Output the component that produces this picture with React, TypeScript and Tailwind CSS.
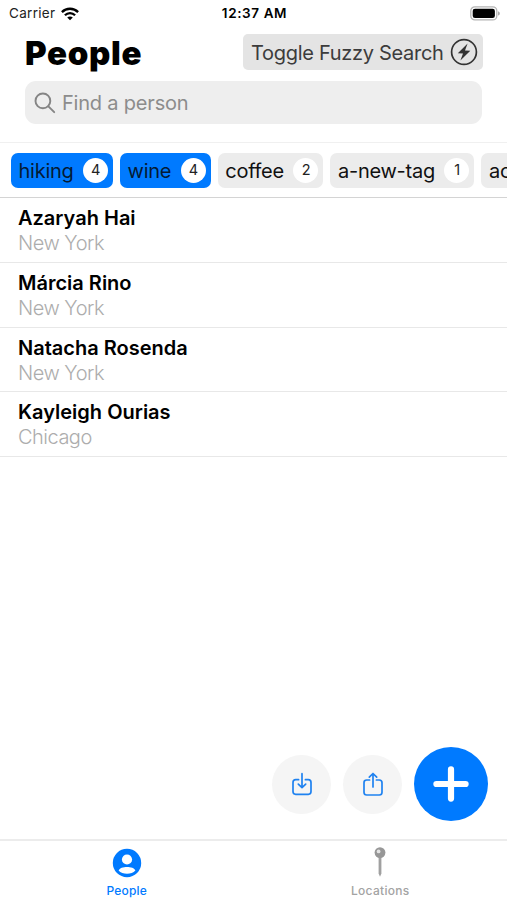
import React, { useState } from "react";

interface Tag {
  name: string;
  count: number;
}

interface Person {
  name: string;
  location: string;
}

const tags: Tag[] = [
  { name: "hiking", count: 4 },
  { name: "wine", count: 4 },
  { name: "coffee", count: 2 },
  { name: "a-new-tag", count: 1 },
  { name: "acting", count: 1 },
];

const people: Person[] = [
  { name: "Azaryah Hai", location: "New York" },
  { name: "Márcia Rino", location: "New York" },
  { name: "Natacha Rosenda", location: "New York" },
  { name: "Kayleigh Ourias", location: "Chicago" },
];

const StatusBar = () => (
  <div className="grid grid-cols-3 items-center h-[27px] pl-[9px] pr-[7px] text-[13.5px] leading-none">
    <div className="flex items-center gap-[6px]">
      <span className="text-[#222] tracking-[0.3px]">Carrier</span>
      <svg width="18" height="14" viewBox="0 0 18 14" fill="none" stroke="#000" strokeWidth="2.3">
        <path d="M0.9 5.1C5.4 0.6 12.6 0.6 17.1 5.1" />
        <path d="M3.9 8.2C6.8 5.3 11.2 5.3 14.1 8.2" />
        <path d="M9 13.3L6.2 10.5C7.8 9 10.2 9 11.8 10.5Z" fill="#000" stroke="none" />
      </svg>
    </div>
    <span className="pt-px text-center font-semibold whitespace-nowrap tracking-[0.6px]">12:37 AM</span>
    <svg className="justify-self-end" width="30" height="15" viewBox="0 0 30 15">
      <rect x="0.8" y="0.9" width="26" height="13" rx="4" fill="#fff" stroke="#b4b4b4" strokeWidth="1.3" />
      <rect x="2.7" y="2.7" width="22.2" height="9.4" rx="2.3" fill="#000" />
      <path d="M28.2 5.2C30.2 6.2 30.2 8.6 28.2 9.6Z" fill="#999" />
    </svg>
  </div>
);

const TagButton = ({ tag, active, onClick }: { tag: Tag; active: boolean; onClick: () => void }) => (
  <button
    onClick={onClick}
    className={`flex shrink-0 items-center justify-between h-[35px] pl-[7.5px] pr-[5px] rounded-[7px] text-[20px] tracking-[-0.25px] ${
      active ? "bg-[#007aff] text-[#041a35]" : "bg-[#ececec] text-[#111]"
    }`}
  >
    <span className="pt-px">{tag.name}</span>
    <span className="flex items-center justify-center ml-[9.5px] size-[25px] rounded-full bg-white text-[14.5px] text-[#222]">
      {tag.count}
    </span>
  </button>
);

const App = () => {
  const [search, setSearch] = useState("");
  const [activeTags, setActiveTags] = useState<string[]>(["hiking", "wine"]);

  const toggleTag = (name: string): void => {
    setActiveTags(
      activeTags.includes(name)
        ? activeTags.filter((t) => t !== name)
        : [...activeTags, name]
    );
  };

  return (
    <div className="relative flex flex-col w-full max-w-[507px] h-screen overflow-hidden bg-white text-black font-['Inter','Liberation_Sans',sans-serif]">
      <StatusBar />

      {/* Header */}
      <div className="flex items-center justify-between mt-[7px] h-9 pl-[25px] pr-6">
        <h1 className="pt-[2px] text-[33px] leading-9 font-black tracking-[0.7px]">People</h1>
        <button className="flex items-center justify-between w-[240px] h-9 pl-2 pr-[5px] rounded-[5px] bg-[#e4e4e4] text-[#3c3c3c] text-[20px] whitespace-nowrap">
          <span className="pt-[2px] tracking-[-0.3px]">Toggle Fuzzy Search</span>
          <svg width="28" height="28" viewBox="0 0 28 28" fill="none">
            <circle cx="14" cy="14" r="12.4" stroke="#333" strokeWidth="1.7" />
            <path d="M17.6 5.6L7.8 15.2L13 15.6L10.4 22.6L20.3 12.7L15 12.4Z" fill="#333" />
          </svg>
        </button>
      </div>

      {/* Search */}
      <div className="flex items-center mt-[11px] ml-[25px] mr-[25px] h-[43px] pl-[9px] gap-[6px] rounded-[11px] bg-[#eeeeee]">
        <svg className="shrink-0" width="22" height="22" viewBox="0 0 22 22" fill="none" stroke="#858585" strokeWidth="1.9" strokeLinecap="round">
          <circle cx="8.9" cy="8.9" r="7.4" />
          <path d="M14.4 14.4L20.2 20.2" />
        </svg>
        <input
          type="text"
          value={search}
          onChange={(e) => setSearch(e.target.value)}
          placeholder="Find a person"
          className="w-full bg-transparent outline-none text-[20px] tracking-[-0.2px] placeholder:text-[#8c8c8c]"
        />
      </div>

      {/* Tags */}
      <div className="flex items-center mt-[18px] h-14 shrink-0 gap-[7px] pl-[11px] overflow-hidden border-t border-t-[#f0f0f0] border-b border-b-[#d4d4d4]">
        {tags.map((tag) => (
          <TagButton
            key={tag.name}
            tag={tag}
            active={activeTags.includes(tag.name)}
            onClick={() => toggleTag(tag.name)}
          />
        ))}
      </div>

      {/* People list */}
      <ul className="flex-1">
        {people.map((person) => (
          <li key={person.name} className="h-[64.8px] pl-[18px] pt-2 border-b border-[#e8e8e8]">
            <p className="text-[20px] leading-[25px] font-semibold">{person.name}</p>
            <p className="text-[20px] leading-[25px] font-light tracking-[-0.5px] text-[#adadad]">{person.location}</p>
          </li>
        ))}
      </ul>

      {/* Floating actions */}
      <div className="absolute right-[19px] bottom-[79px] flex items-center gap-3">
        <button className="flex items-center justify-center size-[59px] rounded-full bg-[#f5f5f5]">
          <svg width="22" height="26" viewBox="0 0 22 26" fill="none" stroke="#1f82f0" strokeWidth="1.7" strokeLinecap="round" strokeLinejoin="round">
            <path d="M7.6 8.7H4.7Q2 8.7 2 11.4V20.6Q2 23.3 4.7 23.3H17.3Q20 23.3 20 20.6V11.4Q20 8.7 17.3 8.7H14.4" />
            <path d="M11 2.7V16.4M7.3 13.1L11 16.6L14.7 13.1" />
          </svg>
        </button>
        <button className="flex items-center justify-center size-[59px] rounded-full bg-[#f5f5f5]">
          <svg width="22" height="26" viewBox="0 0 22 26" fill="none" stroke="#1f82f0" strokeWidth="1.7" strokeLinecap="round" strokeLinejoin="round">
            <path d="M7.6 9H4.7Q2 9 2 11.7V21.3Q2 24 4.7 24H17.3Q20 24 20 21.3V11.7Q20 9 17.3 9H14.4" />
            <path d="M11 16V2.7M7.3 6.1L11 2.5L14.7 6.1" />
          </svg>
        </button>
        <button className="flex items-center justify-center size-[74px] rounded-full bg-[#007aff]">
          <svg width="36" height="36" viewBox="0 0 36 36" stroke="#fff" strokeWidth="6.2" strokeLinecap="round">
            <path d="M18 3.4V32.6M3.4 18H32.6" />
          </svg>
        </button>
      </div>

      {/* Tab bar */}
      <nav className="grid grid-cols-2 h-[61px] shrink-0 border-t-2 border-[#ececec] text-[12px] leading-none font-medium">
        <button className="flex flex-col items-center pt-[7px] text-[#007aff]">
          <svg width="30" height="30" viewBox="0 0 30 30">
            <circle cx="15" cy="15" r="14.2" fill="#007aff" />
            <circle cx="15" cy="11.5" r="5.1" fill="#fff" />
            <path d="M6.6 22.4C8.5 17.8 21.5 17.8 23.4 22.4C19.5 26.8 10.5 26.8 6.6 22.4Z" fill="#fff" />
          </svg>
          <span className="mt-[7px] tracking-[0.2px]">People</span>
        </button>
        <button className="flex flex-col items-center pt-[6px] text-[#a3a3a3]">
          <svg width="12" height="30" viewBox="0 0 12 30">
            <path d="M4.6 9H7.4V26.5L6 29.8L4.6 26.5Z" fill="#a0a0a0" />
            <circle cx="6" cy="5.6" r="5.4" fill="#979797" />
            <circle cx="4.6" cy="4.4" r="1.9" fill="#e3e3e3" />
          </svg>
          <span className="mt-2 tracking-[0.3px]">Locations</span>
        </button>
      </nav>
    </div>
  );
};

export default App;
